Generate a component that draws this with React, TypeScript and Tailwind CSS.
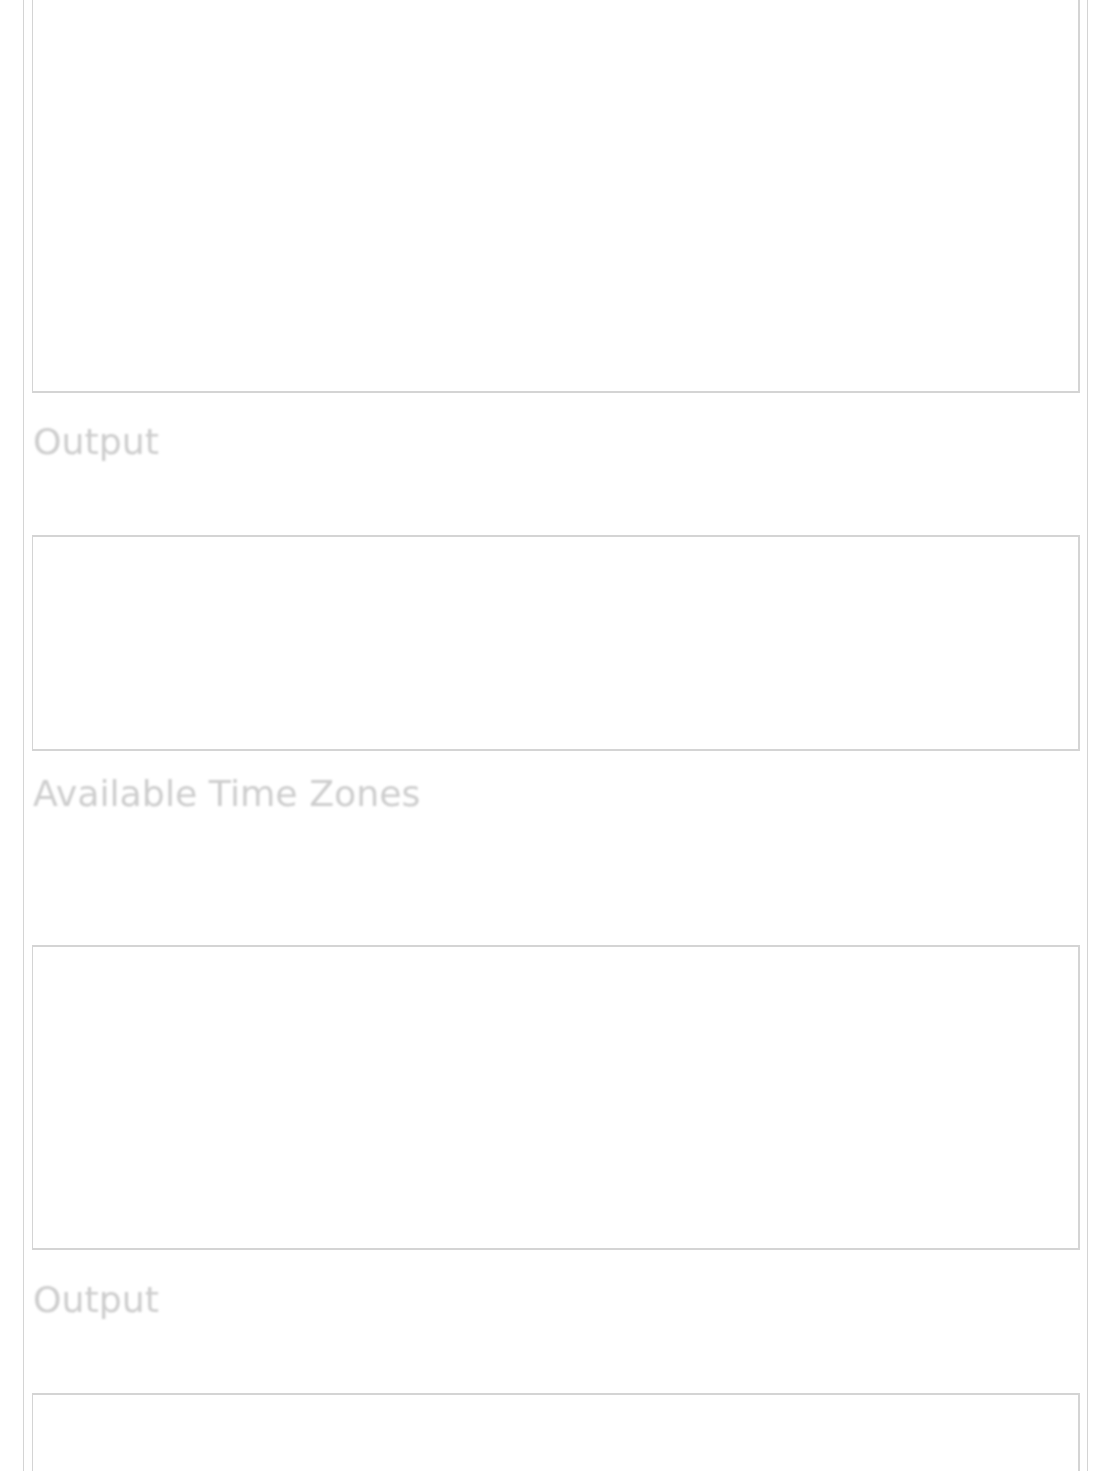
export default function App() {
  const sides = 'border-r-2 border-b-2 border-l border-[#d4d4d4] bg-white';
  const box = `border-t-2 ${sides}`;
  const heading = "ml-px text-[36.3px] leading-[36px] text-[#cdcdcd] blur-[1.2px] font-['DejaVu_Sans',Verdana,sans-serif]";

  return (
    <div className="h-[1471px] overflow-hidden bg-white pl-[23px]">
      <div className="w-[1065px] min-h-[1471px] border-x border-[#d4d4d4] pl-2 pr-[7px]">
        <div className={`${sides} h-[393px]`} />

        <h2 className={`${heading} mt-[31px]`}>Output</h2>
        <div className={`${box} h-[216px] mt-[75px]`} />

        <h2 className={`${heading} mt-[25px]`}>Available Time Zones</h2>
        <div className={`${box} h-[305px] mt-[133px]`} />

        <h2 className={`${heading} mt-[32px]`}>Output</h2>
        <div className={`${box} h-[200px] mt-[75px]`} />
      </div>
    </div>
  );
}
